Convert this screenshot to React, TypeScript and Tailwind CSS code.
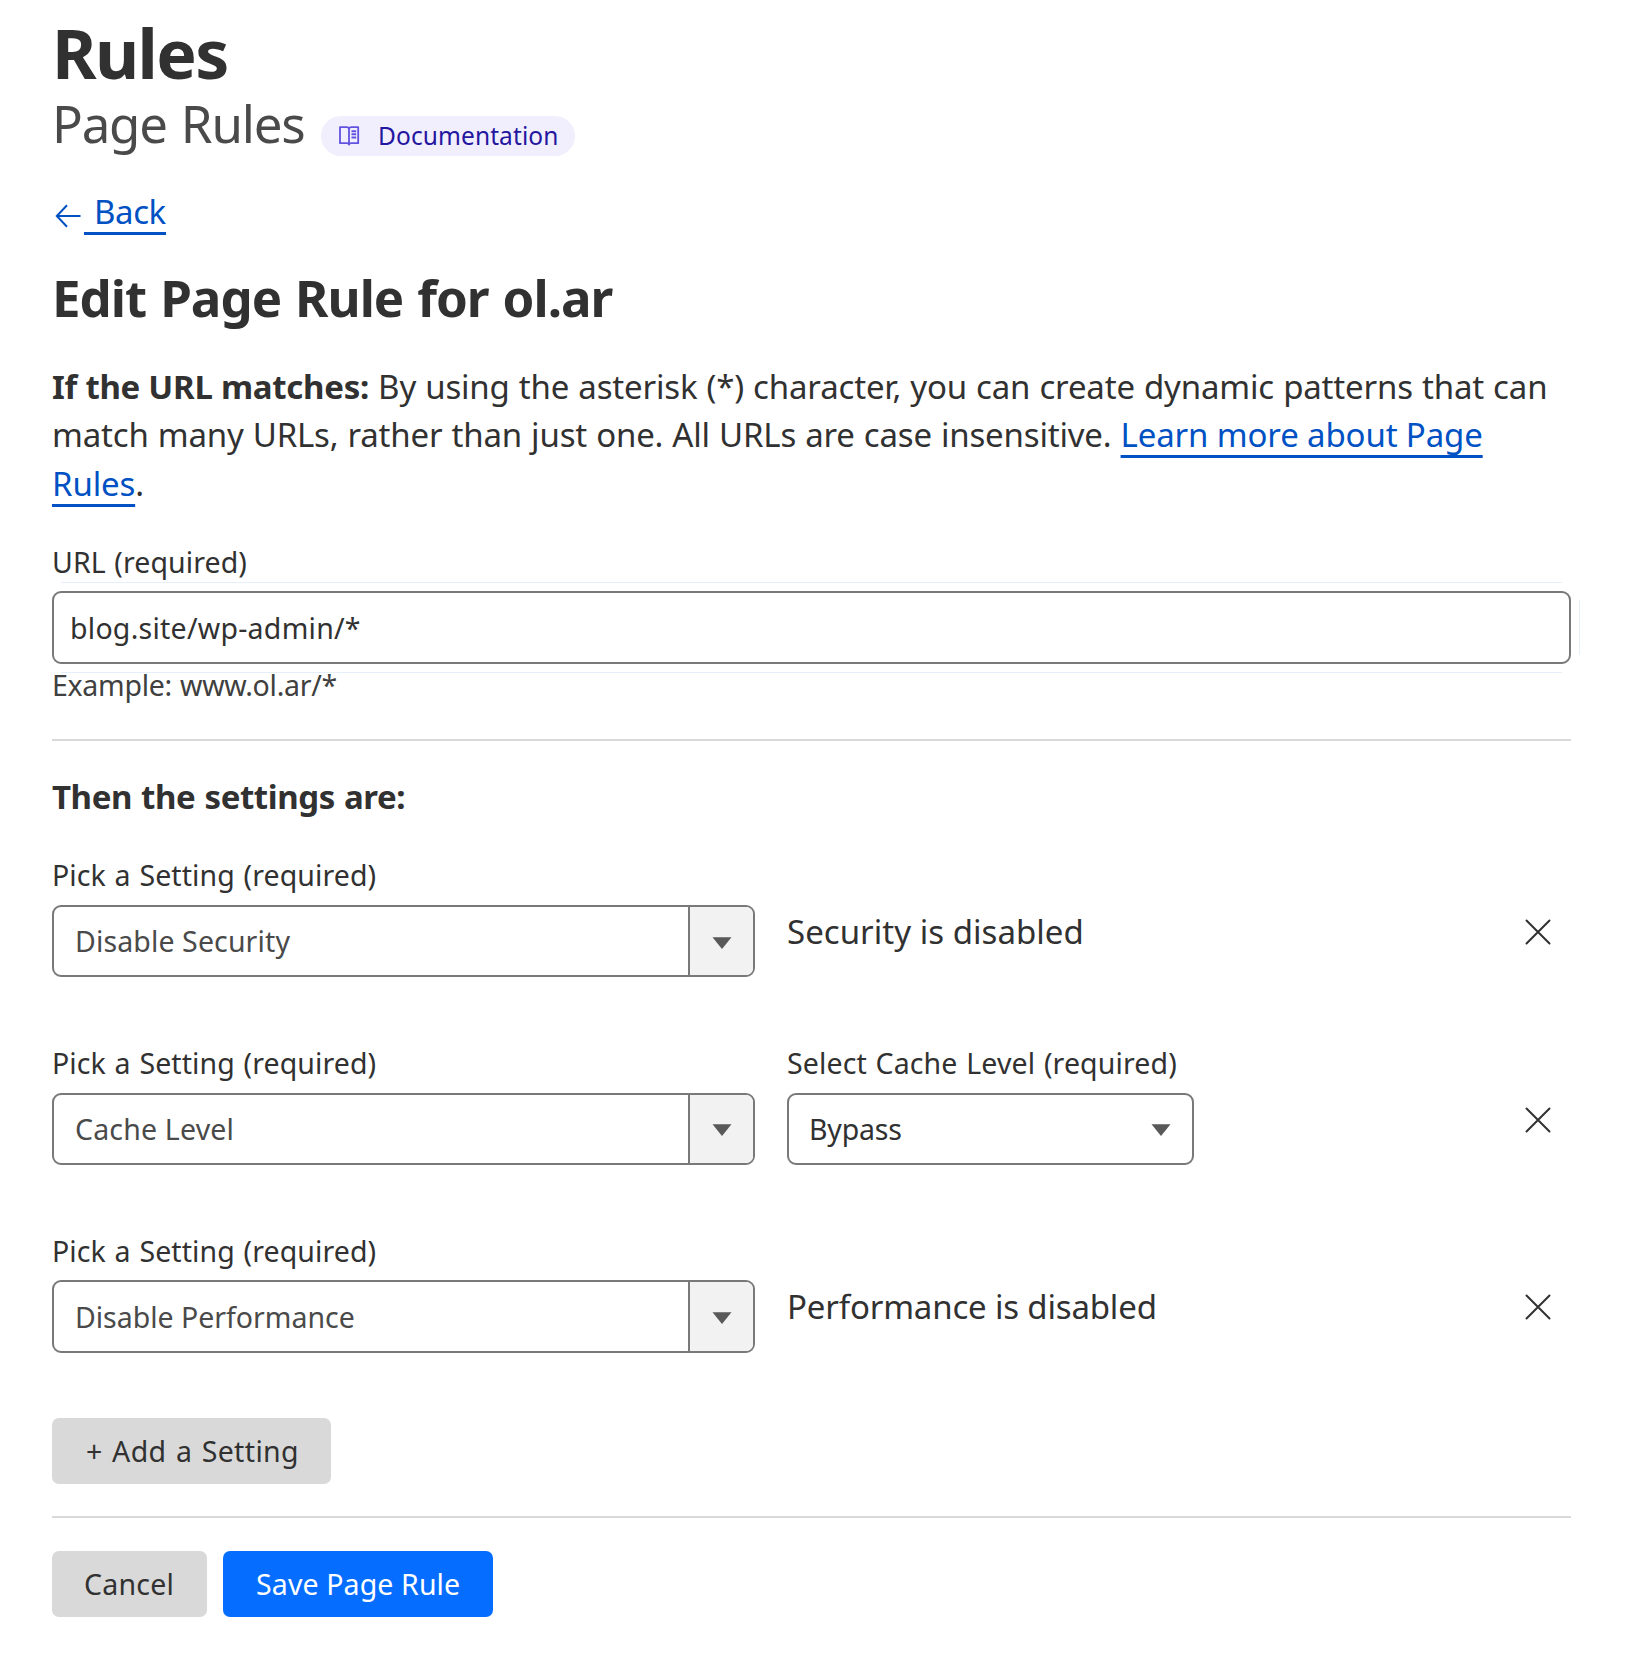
import React from "react";

function BookIcon() {
  return (
    <svg width="22" height="20" viewBox="0 0 22 20" fill="none" stroke="#6152e2" strokeWidth="1.8" strokeLinejoin="round">
      <path d="M10 2.600C9.600 1.500 8.800 1.200 7.800 1.200H1V17.200H8C9 17.200 9.600 17.700 10 18.600C10.400 17.700 11 17.200 12 17.200H19.200V1.200H12.400C11.200 1.200 10.400 1.500 10 2.600V18.600" />
      <path d="M12.500 5.200H17.200M12.500 8.300H17.200M12.500 11.400H17.200" strokeWidth="2" />
    </svg>
  );
}

function ArrowLeftIcon() {
  return (
    <svg width="26" height="24" viewBox="0 0 26 24" fill="none" stroke="#0051c3" strokeWidth="2">
      <path d="M1.500 12H25.500M12 1.200L1.800 12 12 22.800" />
    </svg>
  );
}

function CloseIcon() {
  return (
    <svg width="26" height="26" viewBox="0 0 26 26" fill="none" stroke="#313131" strokeWidth="2" strokeLinecap="round">
      <path d="M1.500 1.500L24.500 24.500M24.500 1.500L1.500 24.500" />
    </svg>
  );
}

function Caret() {
  return (
    <svg width="20" height="12" viewBox="0 0 20 12" fill="#595959">
      <path d="M0.500 0.300H19.500L10 12Z" />
    </svg>
  );
}

type SettingRowProps = {
  value: string;
  valueClass: string;
  labelClass?: string;
  children: React.ReactNode;
};

function SettingRow({ value, valueClass, labelClass = "leading-10", children }: SettingRowProps) {
  return (
    <div className="flex h-[122.300px] items-start">
      <div className="w-[703px]">
        <div className={"h-10 text-[28.5px] tracking-[0.1px] [word-spacing:1.2px] " + labelClass}>Pick a Setting (required)</div>
        <div className="mt-2.5 flex h-[72.3px] items-stretch overflow-hidden rounded-[9px] border-2 border-[#797979] bg-white">
          <div className={"flex flex-1 items-center pl-[21px] text-[28.5px] leading-10 text-[#4a4a4a] " + valueClass}>{value}</div>
          <div className="flex w-[65px] items-center justify-center border-l-2 border-[#797979] bg-[#f2f2f2] pt-[3px]">
            <Caret />
          </div>
        </div>
      </div>
      <div className="ml-8 flex-1">{children}</div>
      <button className="mt-16 mr-5 block size-[26px]" aria-label="Remove setting">
        <CloseIcon />
      </button>
    </div>
  );
}

export default function App() {
  return (
    <main className="flex h-[1653px] w-[1632px] flex-col bg-white pt-[17px] pr-[61px] pl-[52px] font-['Noto_Sans','Open_Sans',sans-serif] whitespace-nowrap text-[#313131]">
      <h1 className="h-[71px] text-[68px] leading-[71px] font-bold tracking-[-1.6px]">Rules</h1>
      <div className="flex h-[70px] items-end">
        <h2 className="w-[269px] text-[51px] leading-[70px] tracking-[-1.2px] [word-spacing:2px] text-[#4a4a4a]">Page Rules</h2>
        <a className="mb-0.5 flex h-10 w-[254px] items-center rounded-full bg-[#f1effd] pl-[18px] text-[#2516a0]">
          <BookIcon />
          <span className="ml-[17px] text-[24.5px] leading-10 tracking-[0.1px]">Documentation</span>
        </a>
      </div>

      <div className="mt-[31px] flex h-[46px] text-[#0051c3]">
        <span className="mt-[15px] ml-[3px] w-[29px]">
          <ArrowLeftIcon />
        </span>
        <a className="h-[46px] w-[82px] border-b-[3px] border-[#0051c3] pl-[10px] text-[33px] leading-[45px] tracking-[-0.4px]">Back</a>
      </div>

      <h3 className="mt-8 h-[60px] text-[51px] leading-[60px] font-bold tracking-[-0.98px] [word-spacing:1.6px]">Edit Page Rule for ol.ar</h3>

      <p className="mt-[35.5px] h-[145.5px] text-[33px] leading-[48.5px]">
        <strong className="font-bold tracking-[-0.271px]">If the URL matches:</strong>
        <span className="tracking-[-0.170px] [word-spacing:0.700px]"> By using the asterisk (*) character, you can create dynamic patterns that can</span>
        <br />
        <span className="tracking-[-0.180px] [word-spacing:0.700px]">match many URLs, rather than just one. All URLs are case insensitive. </span>
        <a className="tracking-[-0.14px] text-[#0051c3] underline decoration-[3px] underline-offset-[8px] [text-decoration-skip-ink:none]">
          Learn more about Page
          <br />
          Rules
        </a>
        .
      </p>

      <label className="mt-[34px] h-10 text-[28.5px] leading-10 tracking-[0.1px] [word-spacing:1px]">URL (required)</label>
      <div className="relative mt-[9px] h-[73px] rounded-[9px] border-2 border-[#797979] pt-px pl-[16px] text-[28.5px] leading-[69px] tracking-[0.25px]">
        blog.site/wp-admin/*
        <span className="absolute top-[-11px] right-[7px] left-[7px] h-px bg-[#e5effc]" />
        <span className="absolute right-[7px] bottom-[-11px] left-[7px] h-px bg-[#e5effc]" />
        <span className="absolute top-[7px] right-[-11px] bottom-[7px] w-px bg-[#e5effc]" />
      </div>
      <div className="mt-0.5 h-[38px] text-[28.5px] leading-[38px] tracking-[-0.28px] [word-spacing:1px] text-[#404040]">Example: www.ol.ar/*</div>

      <hr className="mt-[35px] h-0.5 border-0 bg-[#d9d9d9]" />

      <h4 className="mt-[33px] h-[45px] text-[33px] leading-[45px] font-bold tracking-[-0.42px] [word-spacing:1px]">Then the settings are:</h4>

      <div className="mt-9 flex flex-col gap-[65.4px]">
        <SettingRow value="Disable Security" valueClass="tracking-[0.12px]">
          <div className="mt-[54px] text-[33px] leading-[45px] tracking-[0.03px]">Security is disabled</div>
        </SettingRow>
        <SettingRow value="Cache Level" valueClass="tracking-[0.18px]">
          <div className="h-10 text-[28.5px] leading-10 tracking-[0.12px] [word-spacing:1.2px]">Select Cache Level (required)</div>
          <div className="mt-2.5 flex h-[72.3px] w-[407px] items-center justify-between rounded-[9px] border-2 border-[#797979] pr-[21px] pl-5 text-[28.5px] leading-10 tracking-[-0.2px]">
            Bypass
            <span className="pt-[3px]">
              <Caret />
            </span>
          </div>
        </SettingRow>
        <SettingRow value="Disable Performance" valueClass="tracking-[-0.02px]" labelClass="leading-[42px]">
          <div className="mt-[54px] text-[33px] leading-[45px] tracking-[-0.17px]">Performance is disabled</div>
        </SettingRow>
      </div>

      <button className="mt-[65.3px] h-[66px] w-[279px] rounded-[7px] bg-[#d9d9d9] pl-[34px] text-left text-[28.5px] leading-[66px] tracking-[0.35px] [word-spacing:1.7px]">
        + Add a Setting
      </button>

      <hr className="mt-8 h-0.5 border-0 bg-[#d9d9d9]" />

      <div className="mt-[33px] flex gap-4">
        <button className="h-[66px] w-[155px] rounded-[7px] bg-[#d9d9d9] pl-8 text-left text-[28.5px] leading-[66px] tracking-[0.25px]">Cancel</button>
        <button className="h-[66px] w-[270px] rounded-[7px] bg-[#056dff] pl-[33px] text-left text-[28.5px] leading-[66px] tracking-[0.12px] text-white">
          Save Page Rule
        </button>
      </div>
    </main>
  );
}
